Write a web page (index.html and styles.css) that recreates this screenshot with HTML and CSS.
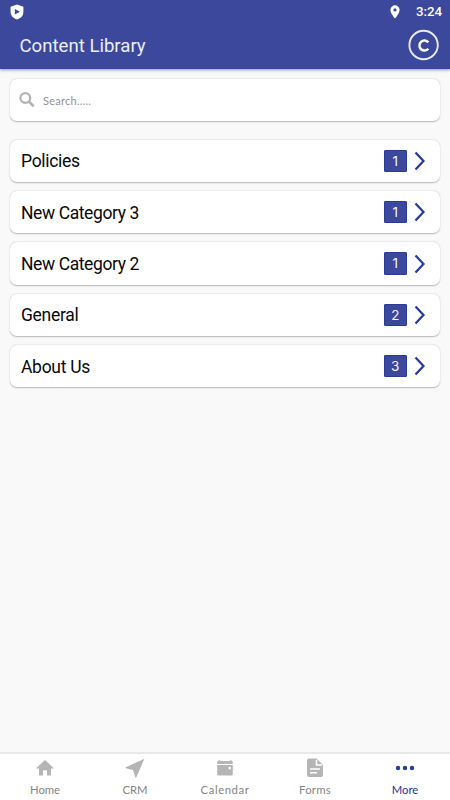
FILE: index.html
```html
<!DOCTYPE html>
<html lang="en">
<head>
<meta charset="utf-8">
<title>Content Library</title>
<link rel="stylesheet" href="styles.css">
</head>
<body>
<header class="header">
  <div class="status">
    <svg class="shield" viewBox="0 0 14 16"><path fill="#fff" d="M7 .5 13.400 2.700V8c0 3.600-2.600 6.300-6.400 7.600C3.200 14.300.6 11.600.6 8V2.700z"/><path fill="#3b489b" d="M4.800 4.900v5.700L10 7.750z"/></svg>
    <svg class="pin" viewBox="0 0 10 14"><path fill="#fff" fill-rule="evenodd" d="M5 .3A4.600 4.600 0 0 0 .4 4.900C.4 8.300 5 13.500 5 13.500S9.600 8.300 9.600 4.900A4.600 4.600 0 0 0 5 .3zM5 3.300a1.600 1.600 0 1 1 0 3.200 1.600 1.600 0 0 1 0-3.200z"/></svg>
    <span class="time">3:24</span>
  </div>
  <div class="titlebar">
    <h1 class="title">Content Library</h1>
    <svg class="avatar" viewBox="0 0 32 32" fill="none" stroke="#fff"><circle cx="15.600" cy="16" r="14.200" stroke="#e9ebf7" stroke-width="1.900"/><path stroke-width="2.500" d="M20.300 13.400A5 5 0 1 0 20.300 19.800"/></svg>
  </div>
</header>
<main class="content">
  <label class="card search">
    <svg class="magnifier" viewBox="0 0 16 16" fill="none" stroke="#b3b3b3"><circle cx="6.300" cy="6" r="4.900" stroke-width="2.200"/><path stroke-width="2.700" d="m9.900 9.600 4.800 4.600"/></svg>
    <span class="placeholder">Search.....</span>
  </label>
  <div class="list">
    <div class="card row"><span class="name">Policies</span><span class="count">1</span><svg class="chevron" viewBox="0 0 12 20"><path d="m1.500 1.500 8 8.500-8 8.500"/></svg></div>
    <div class="card row"><span class="name long">New Category 3</span><span class="count">1</span><svg class="chevron" viewBox="0 0 12 20"><path d="m1.500 1.500 8 8.500-8 8.500"/></svg></div>
    <div class="card row"><span class="name long">New Category 2</span><span class="count">1</span><svg class="chevron" viewBox="0 0 12 20"><path d="m1.500 1.500 8 8.500-8 8.500"/></svg></div>
    <div class="card row"><span class="name">General</span><span class="count">2</span><svg class="chevron" viewBox="0 0 12 20"><path d="m1.500 1.500 8 8.500-8 8.500"/></svg></div>
    <div class="card row"><span class="name">About Us</span><span class="count">3</span><svg class="chevron" viewBox="0 0 12 20"><path d="m1.500 1.500 8 8.500-8 8.500"/></svg></div>
  </div>
</main>
<nav class="tabs">
  <div class="tab"><svg viewBox="0 0 20 20"><path d="M8 17.600v-5.400h4v5.400h4V10.400h3L10 2 1 10.400h3v7.200z"/></svg><span class="home">Home</span></div>
  <div class="tab"><svg viewBox="0 0 20 20"><path d="M19.400.8.700 9.200v1l7.300 1.900 2.300 7.300h1z"/></svg><span class="crm">CRM</span></div>
  <div class="tab"><svg viewBox="0 0 20 20"><path d="M2.200 6.100V4.300q0-1.400 1.400-1.400V1.900h1.300v1h10.200v-1h1.300v1q1.400 0 1.400 1.400v1.800z"/><path fill-rule="evenodd" d="M2.200 7h15.600v9.200q0 1.400-1.400 1.400H3.600q-1.400 0-1.400-1.400zM13.600 9v2.200h2.200V9z"/></svg><span class="calendar">Calendar</span></div>
  <div class="tab"><svg viewBox="0 0 20 20"><path d="M4 .5h7.600l6.400 6.400V17q0 2-2 2H4q-2 0-2-2V2.500q0-2 2-2z"/><path fill="none" stroke="#fff" stroke-width="1.500" d="M11.500 1.700v5.400H17M5 11h10M5 14.800h7"/></svg><span class="forms">Forms</span></div>
  <div class="tab active"><svg viewBox="0 0 20 20"><circle cx="3" cy="10" r="2.200"/><circle cx="10" cy="10" r="2.200"/><circle cx="17" cy="10" r="2.200"/></svg><span class="more">More</span></div>
</nav>
</body>
</html>
```
FILE: styles.css
```css
* { box-sizing: border-box; }
body {
  margin: 0;
  height: 800px;
  display: flex;
  flex-direction: column;
  background: #f9f9f9;
  font-family: Roboto, sans-serif;
  overflow: hidden;
}
svg { display: block; flex: none; }
.header {
  height: 69px;
  background: #3b489b;
  border-bottom: 1px solid #3246a8;
  box-shadow: 0 1px 3px rgba(0, 0, 0, .4);
  color: #fff;
}
.status {
  height: 23px;
  display: flex;
  align-items: center;
  padding: 0 7px 0 10px;
}
.shield { width: 14px; height: 16px; }
.pin { width: 10px; height: 14px; margin-left: auto; }
.time {
  width: 27px;
  margin-left: 16px;
  font-size: 13.300px;
  font-weight: 500;
  line-height: 23px;
  white-space: nowrap;
}
.titlebar {
  height: 45px;
  display: flex;
  align-items: center;
  justify-content: space-between;
  padding: 0 10px 0 19.500px;
}
.title {
  margin: 1px 0 0;
  font-size: 18.600px;
  font-weight: 400;
  color: #eceefa;
}
.avatar { width: 32px; height: 32px; margin-top: -1px; }
.content { flex: 1; padding: 10px 10px 0; }
.card {
  display: flex;
  align-items: center;
  height: 42.300px;
  background: #fff;
  border-radius: 7px;
  box-shadow: 0 .500px 1.500px rgba(0, 0, 0, .28);
}
.search { padding-left: 9px; }
.magnifier { width: 16px; height: 16px; }
.placeholder {
  margin-left: 8px;
  font: 11px Lato, sans-serif;
  letter-spacing: .250px;
  color: #929292;
}
.list {
  display: flex;
  flex-direction: column;
  gap: 9px;
  margin-top: 18.500px;
}
.row { padding: 0 14px 0 11px; }
.name {
  flex: 1;
  padding-top: 1px;
  font-size: 17.500px;
  letter-spacing: -.300px;
  color: #080808;
}
.long { letter-spacing: -.400px; }
.count {
  width: 22.500px;
  height: 22.500px;
  border: 1px solid #283a9a;
  border-radius: 1px;
  background: #3b489b;
  color: #f4f5ff;
  font: 13.500px/21px Inter, sans-serif;
  text-align: center;
}
.chevron {
  width: 12px;
  height: 20px;
  margin-left: 7.500px;
  fill: none;
  stroke: #2339a0;
  stroke-width: 2.200;
}
.tabs {
  display: flex;
  height: 48px;
  background: #fff;
  border-top: 2px solid #e8e8e8;
}
.tab {
  flex: 1;
  display: flex;
  flex-direction: column;
  align-items: center;
  padding-top: 4px;
  color: #858585;
  font: 11.300px/14px Lato, sans-serif;
}
.tab svg { width: 20px; height: 20px; fill: #b5b5b5; }
.tab span { margin-top: 5px; }
.calendar { letter-spacing: .600px; }
.forms { letter-spacing: .300px; }
.active { color: #2035a0; }
.active svg { fill: #263b9f; }
```
